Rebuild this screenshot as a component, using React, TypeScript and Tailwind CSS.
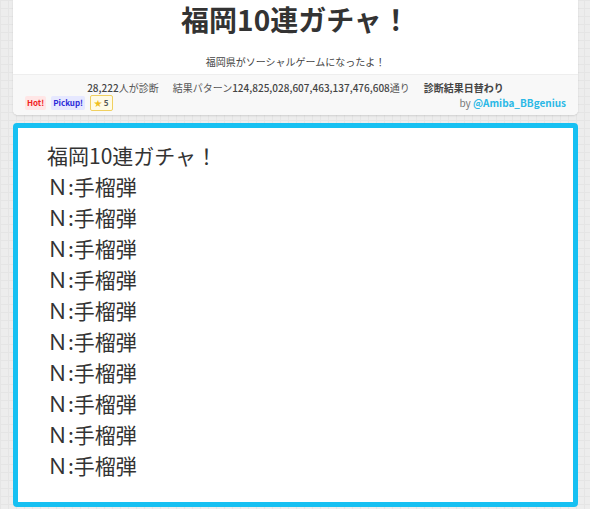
import React from 'react';

const results = Array.from({ length: 10 }, () => 'Ｎ:手榴弾');

const font = 'font-["Noto_Sans_CJK_JP","Noto_Sans",sans-serif]';

export default function App() {
  return (
    <div
      className={`min-h-[509px] w-[590px] bg-[#ededed] bg-[linear-gradient(#e5e5e5_1px,transparent_1px),linear-gradient(90deg,#e5e5e5_1px,transparent_1px)] bg-[size:8px_8px] px-[12px] pl-[13px] pb-[3px] ${font}`}
    >
      {/* header card */}
      <div className="overflow-hidden rounded-b-[5px] bg-white shadow-[0_1px_2px_rgba(0,0,0,0.12)]">
        <h1 className="pt-px text-center text-[28px] font-bold leading-[36px] text-[#333]">福岡10連ガチャ！</h1>
        <p className="mt-[18px] text-center text-[10px] leading-[14px] text-[#444]">福岡県がソーシャルゲームになったよ！</p>
        <div className="mt-[5px] border-t border-[#eeeeee] bg-[#f8f8f8] px-[12px] pb-[4px] pt-[6px]">
          <div className="flex justify-center gap-[14px] text-[10px] leading-[14px] text-[#555]">
            <span>
              <span className="font-medium text-[#444]">28,222</span>人が診断
            </span>
            <span>
              結果パターン<span className="font-medium text-[#444]">124,825,028,607,463,137,476,608</span>通り
            </span>
            <span className="font-bold text-[#444]">診断結果日替わり</span>
          </div>
          <div className="flex items-center justify-between leading-[14px]">
            <div className="flex items-center gap-[5px] text-[8px] font-bold">
              <span className="rounded-[2px] bg-[#ffe6e6] px-[2px] text-[#f02020]">Hot!</span>
              <span className="rounded-[2px] bg-[#e6e8ff] px-[2px] text-[#2a2ad8]">Pickup!</span>
              <span className="rounded-[2px] border border-[#f0d060] bg-[#fffbe6] px-[3px] text-[#555]">
                <span className="text-[#f0c020]">★</span> 5
              </span>
            </div>
            <div className="text-[10px] text-[#777]">
              by <span className="font-bold text-[#2bb8e6]">@Amiba_BBgenius</span>
            </div>
          </div>
        </div>
      </div>

      {/* result box */}
      <div className="mt-[8px] h-[384px] rounded-[4px] border-[5px] border-[#16c0f2] bg-white pl-[29px] pt-[12px]">
        <div className="text-[21px] leading-[31px] text-[#333]">
          <div>福岡10連ガチャ！</div>
          {results.map((r, i) => (
            <div key={i}>{r}</div>
          ))}
        </div>
      </div>
    </div>
  );
}
